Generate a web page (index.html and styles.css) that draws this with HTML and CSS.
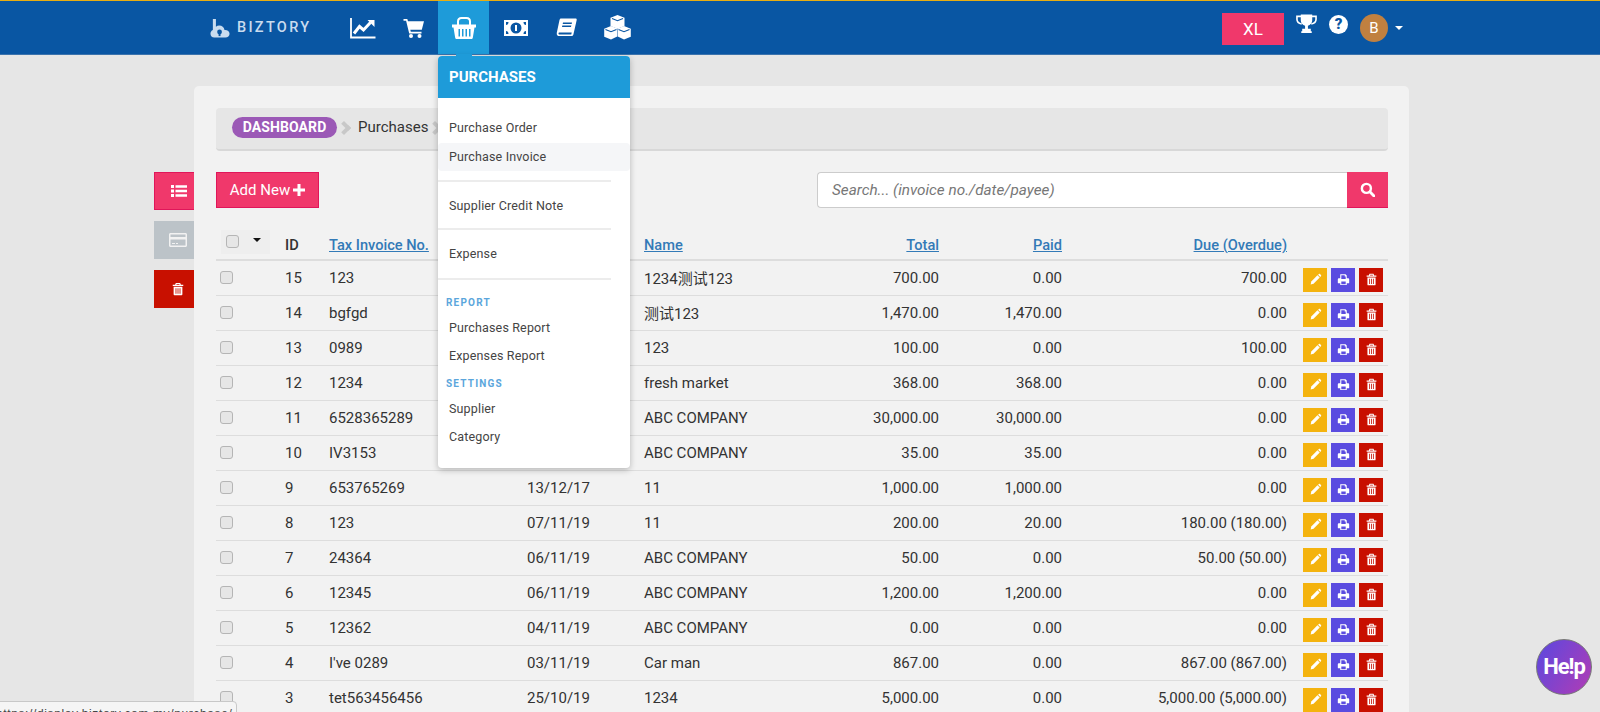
FILE: index.html
```html
<!DOCTYPE html>
<html lang="en">
<head>
<meta charset="utf-8">
<title>Biztory - Purchases</title>
<link rel="stylesheet" href="styles.css">
</head>
<body>
<svg class="defs" width="0" height="0" aria-hidden="true">
  <symbol id="i-pencil" viewBox="0 0 16 16"><path d="M2 14l.8-3.6 7.6-7.6 2.8 2.8-7.6 7.6L2 14z" fill="currentColor"/><path d="M11.2 2l1-.8c.4-.3.9-.3 1.2 0l1.4 1.4c.3.3.3.8 0 1.2l-.9 1z" fill="currentColor"/></symbol>
  <symbol id="i-print" viewBox="0 0 16 16"><path fill-rule="evenodd" d="M4 1.500h6.500L12 3v3.500h1.500c.8 0 1.500.7 1.500 1.500v4c0 .4-.3.7-.7.7H12v2H4v-2H1.700c-.4 0-.7-.3-.7-.7V8c0-.8.7-1.500 1.500-1.500H4zM5.300 2.800v4.500h5.400V4.300H9.500V2.800zM5.300 10.500v3.200h5.400v-3.200z" fill="currentColor"/></symbol>
  <symbol id="i-trash" viewBox="0 0 16 16"><path fill-rule="evenodd" d="M5.500 1h5l.8 2H14v1.500H2V3h2.700zM6.500 2.300L6.100 3h3.800l-.4-.7zM3 5.500h10V14c0 .8-.6 1.200-1.200 1.200H4.200C3.600 15.200 3 14.800 3 14zM5.200 7v6.500h1V7zM7.500 7v6.500h1V7zM9.800 7v6.500h1V7z" fill="currentColor"/></symbol>
</svg>

<header class="topbar">
  <div class="logo">
    <svg class="logo-mark" viewBox="0 0 22 22"><path d="M3 1.500h3.200v8.300c1-.9 2.200-1.300 3.500-1.300 2.900 0 5 1.900 5.500 4.500 2.800-.3 5.300 1.400 5.300 4 0 2.400-1.900 4-4.300 4H4.500C2 21 .5 19.200.5 17c0-1.800 1-3.300 2.500-3.900z" fill="#c9dcef"/><circle cx="10" cy="15.200" r="2.500" fill="#0956a3"/><rect x="9" y="15.500" width="2" height="4" fill="#0956a3"/></svg>
    <span class="logo-text">BIZTORY</span>
  </div>
  <nav class="mainnav">
    <a class="navitem"><svg viewBox="0 0 26 22" width="26" height="22"><path d="M1 1v19.500h24.500" fill="none" stroke="#fff" stroke-width="1.800"/><path d="M4 16.500l5.500-7 4 3.500 7-7.500" fill="none" stroke="#fff" stroke-width="3"/><path d="M17.500 3h7v7z" fill="#fff"/></svg></a>
    <a class="navitem"><svg viewBox="0 0 22 22" width="22" height="22"><path d="M.5 2h3.800l.7 2.200H21l-2.200 8.500H7.300l.5 2h10.700v1.800H6.200L3.100 3.800H.5z" fill="#fff"/><circle cx="8" cy="19" r="2" fill="#fff"/><circle cx="16.500" cy="19" r="2" fill="#fff"/></svg></a>
    <a class="navitem is-active"><svg viewBox="0 0 26 24" width="26" height="24"><path d="M7 9.500V5.500C7 3.500 8.500 2 10.500 2h5C17.500 2 19 3.500 19 5.500v4" fill="none" stroke="#fff" stroke-width="2"/><path fill-rule="evenodd" d="M1 8.500h24v3h-1.500l-1.700 10.200c-.1.800-.7 1.300-1.500 1.300H5.700c-.8 0-1.400-.5-1.500-1.300L2.500 11.500H1zM7.500 13v7.500h1.500V13zM11 13v7.500h1.500V13zM14.500 13v7.500H16V13zM18 13v7.500h1.500V13z" fill="#fff"/></svg></a>
    <a class="navitem"><svg viewBox="0 0 24 16" width="24" height="16"><path fill-rule="evenodd" d="M0 0h24v16H0zM2 2v12h2.500C4.500 12 3.500 11 2 11V5c1.500 0 2.500-1 2.500-3zM19.500 2c0 2 1 3 2.500 3v6c-1.500 0-2.500 1-2.500 3H22V2zM12 2.500a5.500 5.500 0 100 11 5.500 5.500 0 000-11z" fill="#fff"/><rect x="11" y="5" width="2" height="6" fill="#fff"/></svg></a>
    <a class="navitem"><svg viewBox="0 0 21 20" width="21" height="20"><path fill-rule="evenodd" d="M5 .5h14.500c1 0 1.400.7 1.200 1.500l-3.300 14.500c-.2.800-.8 1.500-1.800 1.500H3c-1.200 0-2-.6-2.200-1.800-.2-.8 0-1.500.2-2.400L3.500 2C3.700 1.100 4.200.5 5 .5zM7 4.500l-.3 1.500h9l.3-1.500zM6.300 7.500L6 9h9l.3-1.500zM3.500 14.500c-.8 0-1 .5-1 1 0 .6.400 1 1.200 1h11.500c.3-.6.400-1.300.5-2z" fill="#fff"/></svg></a>
    <a class="navitem"><svg viewBox="0 0 27 25" width="27" height="25"><path d="M13.500 0l7 2.800v8.200l-7 2.800-7-2.800V2.800z" fill="#fff"/><path d="M7 11l6.300 2.500v8L7 24.500.2 21.800v-8z" fill="#fff"/><path d="M20 11l6.800 2.800v8L20 24.500l-6.300-3v-8z" fill="#fff"/><path d="M8 3.500l5.500 2.200L19 3.500M1.500 14.500L7 16.700l5.500-2.200M14.500 14.500l5.500 2.200 5.500-2.200" fill="none" stroke="#0956a3" stroke-width="1.100"/></svg></a>
  </nav>
  <div class="topbar-right">
    <button class="plan">XL</button>
    <svg class="trophy" viewBox="0 0 22 20" width="21" height="20"><path d="M5 0h12v6c0 3-2 5-4.500 5.800V15h3v2.500h1v2H5.500v-2h1V15h3v-3.200C7 11 5 9 5 6z" fill="#fff"/><path d="M5.500 2H1v3c0 3 2.500 4.500 5 5M16.500 2H21v3c0 3-2.500 4.500-5 5" fill="none" stroke="#fff" stroke-width="1.700"/></svg>
    <span class="help-dot">?</span>
    <span class="avatar">B</span>
    <span class="caret"></span>
  </div>
</header>

<aside class="menu">
  <h2 class="menu-title">PURCHASES</h2>
  <ul class="menu-list first">
    <li>Purchase Order</li>
    <li class="hover">Purchase Invoice</li>
  </ul>
  <ul class="menu-list note"><li>Supplier Credit Note</li></ul>
  <ul class="menu-list expense"><li>Expense</li></ul>
  <div class="menu-group">
    <h3 class="menu-label">REPORT</h3>
    <ul class="menu-sub"><li>Purchases Report</li><li>Expenses Report</li></ul>
    <h3 class="menu-label settings">SETTINGS</h3>
    <ul class="menu-sub"><li>Supplier</li><li>Category</li></ul>
  </div>
</aside>

<div class="page">
  <div class="side">
    <button class="side-btn pink"><svg viewBox="0 0 16 14" width="16" height="14"><path d="M0 1h3v3H0zM0 5.500h3v3H0zM0 10h3v3H0zM4.500 1.200H16v2.600H4.500zM4.500 5.700H16v2.600H4.500zM4.500 10.200H16v2.600H4.500z" fill="#fff"/></svg></button>
    <button class="side-btn grey"><svg viewBox="0 0 18 14" width="18" height="14"><path fill-rule="evenodd" d="M1.500 0h15c.8 0 1.500.7 1.500 1.500v11c0 .8-.7 1.500-1.500 1.500h-15C.7 14 0 13.300 0 12.500v-11C0 .7.700 0 1.500 0zM1.500 1.500V4h15V1.500zM1.500 6.500v6h15v-6zM3 10h3v1H3zM7 10h2v1H7z" fill="#f2f2f2"/></svg></button>
    <button class="side-btn red"><svg width="14" height="16"><use href="#i-trash"/></svg></button>
  </div>

  <main class="panel">
    <div class="crumbs">
      <span class="pill">DASHBOARD</span>
      <span class="chev"></span>
      <span class="crumb">Purchases</span>
      <span class="chev"></span>
    </div>

    <div class="toolbar">
      <button class="add">Add New <svg viewBox="0 0 12 12" width="12" height="12"><path d="M4.500 0h3v4.500H12v3H7.500V12h-3V7.500H0v-3h4.500z" fill="#fff"/></svg></button>
      <form class="search">
        <input class="search-input" type="text" placeholder="Search... (invoice no./date/payee)">
        <button class="search-btn" type="button"><svg viewBox="0 0 16 16" width="15" height="15"><circle cx="6.800" cy="6.800" r="4.800" fill="none" stroke="#fff" stroke-width="2.600"/><path d="M10.500 10.500L15 15" stroke="#fff" stroke-width="3" stroke-linecap="round"/></svg></button>
      </form>
    </div>

    <table class="grid">
      <colgroup>
        <col class="c-check"><col class="c-id"><col class="c-tax"><col class="c-date"><col class="c-name"><col class="c-total"><col class="c-paid"><col class="c-due"><col class="c-act">
      </colgroup>
      <thead>
        <tr>
          <th><span class="headcheck"><input type="checkbox" class="cb"><span class="headcaret"></span></span></th>
          <th>ID</th>
          <th><a>Tax Invoice No.</a></th>
          <th></th>
          <th><a>Name</a></th>
          <th class="num"><a>Total</a></th>
          <th class="num"><a>Paid</a></th>
          <th class="num"><a>Due (Overdue)</a></th>
          <th></th>
        </tr>
      </thead>
      <tbody>
        <tr><td><input type="checkbox" class="cb"></td><td>15</td><td>123</td><td></td><td>1234测试123</td><td class="num">700.00</td><td class="num">0.00</td><td class="num">700.00</td><td><div class="acts"><a class="act yellow"><svg><use href="#i-pencil"/></svg></a><a class="act purple"><svg><use href="#i-print"/></svg></a><a class="act crimson"><svg><use href="#i-trash"/></svg></a></div></td></tr>
        <tr><td><input type="checkbox" class="cb"></td><td>14</td><td>bgfgd</td><td></td><td>测试123</td><td class="num">1,470.00</td><td class="num">1,470.00</td><td class="num">0.00</td><td><div class="acts"><a class="act yellow"><svg><use href="#i-pencil"/></svg></a><a class="act purple"><svg><use href="#i-print"/></svg></a><a class="act crimson"><svg><use href="#i-trash"/></svg></a></div></td></tr>
        <tr><td><input type="checkbox" class="cb"></td><td>13</td><td>0989</td><td></td><td>123</td><td class="num">100.00</td><td class="num">0.00</td><td class="num">100.00</td><td><div class="acts"><a class="act yellow"><svg><use href="#i-pencil"/></svg></a><a class="act purple"><svg><use href="#i-print"/></svg></a><a class="act crimson"><svg><use href="#i-trash"/></svg></a></div></td></tr>
        <tr><td><input type="checkbox" class="cb"></td><td>12</td><td>1234</td><td></td><td>fresh market</td><td class="num">368.00</td><td class="num">368.00</td><td class="num">0.00</td><td><div class="acts"><a class="act yellow"><svg><use href="#i-pencil"/></svg></a><a class="act purple"><svg><use href="#i-print"/></svg></a><a class="act crimson"><svg><use href="#i-trash"/></svg></a></div></td></tr>
        <tr><td><input type="checkbox" class="cb"></td><td>11</td><td>6528365289</td><td></td><td>ABC COMPANY</td><td class="num">30,000.00</td><td class="num">30,000.00</td><td class="num">0.00</td><td><div class="acts"><a class="act yellow"><svg><use href="#i-pencil"/></svg></a><a class="act purple"><svg><use href="#i-print"/></svg></a><a class="act crimson"><svg><use href="#i-trash"/></svg></a></div></td></tr>
        <tr><td><input type="checkbox" class="cb"></td><td>10</td><td>IV3153</td><td></td><td>ABC COMPANY</td><td class="num">35.00</td><td class="num">35.00</td><td class="num">0.00</td><td><div class="acts"><a class="act yellow"><svg><use href="#i-pencil"/></svg></a><a class="act purple"><svg><use href="#i-print"/></svg></a><a class="act crimson"><svg><use href="#i-trash"/></svg></a></div></td></tr>
        <tr><td><input type="checkbox" class="cb"></td><td>9</td><td>653765269</td><td>13/12/17</td><td>11</td><td class="num">1,000.00</td><td class="num">1,000.00</td><td class="num">0.00</td><td><div class="acts"><a class="act yellow"><svg><use href="#i-pencil"/></svg></a><a class="act purple"><svg><use href="#i-print"/></svg></a><a class="act crimson"><svg><use href="#i-trash"/></svg></a></div></td></tr>
        <tr><td><input type="checkbox" class="cb"></td><td>8</td><td>123</td><td>07/11/19</td><td>11</td><td class="num">200.00</td><td class="num">20.00</td><td class="num">180.00 (180.00)</td><td><div class="acts"><a class="act yellow"><svg><use href="#i-pencil"/></svg></a><a class="act purple"><svg><use href="#i-print"/></svg></a><a class="act crimson"><svg><use href="#i-trash"/></svg></a></div></td></tr>
        <tr><td><input type="checkbox" class="cb"></td><td>7</td><td>24364</td><td>06/11/19</td><td>ABC COMPANY</td><td class="num">50.00</td><td class="num">0.00</td><td class="num">50.00 (50.00)</td><td><div class="acts"><a class="act yellow"><svg><use href="#i-pencil"/></svg></a><a class="act purple"><svg><use href="#i-print"/></svg></a><a class="act crimson"><svg><use href="#i-trash"/></svg></a></div></td></tr>
        <tr><td><input type="checkbox" class="cb"></td><td>6</td><td>12345</td><td>06/11/19</td><td>ABC COMPANY</td><td class="num">1,200.00</td><td class="num">1,200.00</td><td class="num">0.00</td><td><div class="acts"><a class="act yellow"><svg><use href="#i-pencil"/></svg></a><a class="act purple"><svg><use href="#i-print"/></svg></a><a class="act crimson"><svg><use href="#i-trash"/></svg></a></div></td></tr>
        <tr><td><input type="checkbox" class="cb"></td><td>5</td><td>12362</td><td>04/11/19</td><td>ABC COMPANY</td><td class="num">0.00</td><td class="num">0.00</td><td class="num">0.00</td><td><div class="acts"><a class="act yellow"><svg><use href="#i-pencil"/></svg></a><a class="act purple"><svg><use href="#i-print"/></svg></a><a class="act crimson"><svg><use href="#i-trash"/></svg></a></div></td></tr>
        <tr><td><input type="checkbox" class="cb"></td><td>4</td><td>I've 0289</td><td>03/11/19</td><td>Car man</td><td class="num">867.00</td><td class="num">0.00</td><td class="num">867.00 (867.00)</td><td><div class="acts"><a class="act yellow"><svg><use href="#i-pencil"/></svg></a><a class="act purple"><svg><use href="#i-print"/></svg></a><a class="act crimson"><svg><use href="#i-trash"/></svg></a></div></td></tr>
        <tr><td><input type="checkbox" class="cb"></td><td>3</td><td>tet563456456</td><td>25/10/19</td><td>1234</td><td class="num">5,000.00</td><td class="num">0.00</td><td class="num">5,000.00 (5,000.00)</td><td><div class="acts"><a class="act yellow"><svg><use href="#i-pencil"/></svg></a><a class="act purple"><svg><use href="#i-print"/></svg></a><a class="act crimson"><svg><use href="#i-trash"/></svg></a></div></td></tr>
      </tbody>
    </table>
  </main>
</div>

<div class="status">https://display.biztory.com.my/purchase/</div>
<a class="helpbubble">He!p</a>
</body>
</html>
```

FILE: styles.css
```css
* { box-sizing: border-box; }
html, body { margin: 0; height: 712px; overflow: hidden; }
body {
  background: #e6e6e6;
  color: #333;
  font-family: Roboto, "Noto Sans CJK SC", sans-serif;
  font-size: 14px;
  position: relative;
}
button { font-family: inherit; border: 0; cursor: pointer; }
.defs { position: absolute; }

/* top bar */
.topbar {
  height: 55px;
  background: #0956a3;
  border-top: 1px solid #e8ad12;
  border-bottom: 1px solid #3b73ad;
  display: flex;
  align-items: stretch;
  padding-left: 210px;
}
.logo { width: 127px; display: flex; align-items: center; gap: 6px; }
.logo-mark { width: 21px; height: 22px; }
.logo-text { color: #c9dcef; font-size: 14.500px; letter-spacing: 2.300px; font-weight: 500; }
.mainnav { display: flex; margin-left: 0; }
.navitem { width: 51px; display: flex; align-items: center; justify-content: center; }
.navitem.is-active { background: #1e9bd9; margin-left: -1px; margin-right: 1px; }
.topbar-right {
  margin-left: auto;
  margin-right: 197px;
  display: flex;
  align-items: center;
  position: relative;
}
.plan {
  width: 62px;
  height: 32px;
  background: #f0386b;
  color: #fff;
  font-size: 17px;
  margin-right: 12px;
  margin-top: 3px;
}
.trophy { margin-right: 12px; margin-top: -7px; }
.help-dot {
  width: 19px;
  height: 19px;
  border-radius: 50%;
  background: #fff;
  color: #0956a3;
  font-size: 15px;
  font-weight: 900;
  text-align: center;
  line-height: 19px;
  margin-right: 12px;
  margin-top: -7px;
}
.avatar {
  width: 28px;
  height: 28px;
  border-radius: 50%;
  background: #c08040;
  color: #fff;
  font-size: 15px;
  text-align: center;
  line-height: 28px;
  margin-right: 7px;
}
.caret {
  width: 0;
  height: 0;
  border-left: 4px solid transparent;
  border-right: 4px solid transparent;
  border-top: 4px solid #fff;
}

/* dropdown */
.menu {
  position: absolute;
  left: 438px;
  top: 56px;
  width: 192px;
  height: 412px;
  background: #fff;
  border-radius: 4px;
  box-shadow: 0 2px 6px rgba(0, 0, 0, .25);
  z-index: 5;
}
.menu::before {
  content: "";
  position: absolute;
  left: 18px;
  top: -2px;
  width: 16px;
  height: 2px;
  background: #1e9bd9;
}
.menu-title {
  margin: 0;
  height: 42px;
  background: #1e9bd9;
  color: #fff;
  border-radius: 4px 4px 0 0;
  font-size: 15px;
  font-weight: 700;
  line-height: 43px;
  padding-left: 11px;
}
.menu-list, .menu-sub { list-style: none; margin: 0; padding: 0; }
.menu li {
  font-size: 12.500px;
  letter-spacing: .15px;
  color: #444;
  padding-left: 11px;
  border-radius: 4px;
}
.menu-list {
  width: 173px;
  border-bottom: 2px solid #ececec;
  padding: 11px 0 10px;
}
.menu-list.expense { padding-bottom: 12px; }
.menu-list li { height: 25px; line-height: 25px; }
.menu-list.first { padding: 16px 0 11px; width: 192px; border-bottom: 0; position: relative; }
.menu-list.first::after {
  content: "";
  position: absolute;
  left: 0;
  bottom: 0;
  width: 173px;
  border-bottom: 2px solid #ececec;
}
.menu-list.first li { height: 28.500px; line-height: 28.500px; }
.menu-list.first li.hover { background: #f5f6f8; }
.menu-group { padding-top: 16px; }
.menu-label {
  margin: 0 0 4px 8px;
  font-size: 10px;
  line-height: 14px;
  letter-spacing: 1.200px;
  font-weight: 700;
  color: #5ba6dc;
}
.menu-label.settings { margin-top: 7px; }
.menu-sub li { height: 28px; line-height: 28px; }

/* page */
.page {
  display: flex;
  padding: 31px 0 0 154px;
}
.side {
  width: 40px;
  padding-top: 86px;
  display: flex;
  flex-direction: column;
  gap: 11px;
}
.side-btn {
  width: 40px;
  height: 38px;
  padding: 0 0 0 8px;
  display: flex;
  align-items: center;
  justify-content: center;
}
.side-btn.pink { background: #f0386b; border: 1px solid #e0165a; border-right: 0; }
.side-btn.grey { background: #bcc3c8; }
.side-btn.red { background: #c81000; color: #fff; }
.panel {
  width: 1215px;
  background: #f2f2f2;
  border-radius: 5px 5px 0 0;
  padding: 22px 21px 0 22px;
}
.crumbs {
  height: 43px;
  background: #e6e6e6;
  border-bottom: 2px solid #d8d8d8;
  border-radius: 4px;
  display: flex;
  align-items: center;
  padding: 0 0 2px 16px;
  gap: 7px;
}
.pill {
  background: #9b59b6;
  color: #fff;
  font-size: 14px;
  font-weight: 700;
  letter-spacing: .1px;
  height: 21px;
  line-height: 21px;
  width: 105px;
  text-align: center;
  border-radius: 11px;
}
.chev {
  width: 10px;
  height: 10px;
  margin: 0 4px 0 -5px;
  border-top: 4px solid #c8c8c8;
  border-right: 4px solid #c8c8c8;
  transform: rotate(45deg);
}
.crumb { font-size: 15px; color: #333; margin: -1px 0 0 -2px; }

.toolbar {
  display: flex;
  justify-content: space-between;
  margin-top: 21px;
}
.add {
  width: 103px;
  height: 36px;
  background: #f0386b;
  border: 1px solid #e0165a;
  color: #fff;
  font-size: 15px;
  display: flex;
  align-items: center;
  justify-content: center;
  gap: 3px;
}
.search { display: flex; height: 36px; width: 571px; }
.search-input {
  flex: 1;
  border: 1px solid #ccc;
  border-right: 0;
  border-radius: 4px 0 0 4px;
  padding: 0 14px;
  background: #fff;
  font-family: inherit;
  font-size: 15.300px;
  font-style: italic;
  outline: 0;
}
.search-input::placeholder { color: #777; opacity: 1; }
.search-btn {
  width: 41px;
  background: #f0386b;
  border-bottom: 1px solid #e0165a;
  display: flex;
  align-items: center;
  justify-content: center;
  padding: 0;
}

/* table */
.grid {
  width: 1172px;
  table-layout: fixed;
  border-collapse: collapse;
  margin-top: 21px;
  font-size: 15px;
}
.c-check { width: 64px; }
.c-id { width: 44px; }
.c-tax { width: 198px; }
.c-date { width: 117px; }
.c-name { width: 180px; }
.c-total { width: 125px; }
.c-paid { width: 123px; }
.c-due { width: 225px; }
.c-act { width: 96px; }
.grid th {
  height: 31px;
  padding: 2px 5px 0;
  text-align: left;
  font-size: 14.600px;
  font-weight: 500;
  color: #333;
  border-bottom: 2px solid #ddd;
}
.grid th a { color: #337ab7; text-decoration: underline; }
.grid td {
  height: 35px;
  padding: 0 5px;
  color: #333;
  border-bottom: 1px solid #ddd;
  white-space: nowrap;
}
.grid .num { text-align: right; }
.cb {
  appearance: none;
  display: block;
  margin: 0 0 0 -1px;
  width: 13px;
  height: 13px;
  border: 1px solid #b5b5b5;
  border-radius: 3px;
  background: #e6e6e6;
}
.headcheck {
  display: flex;
  align-items: center;
  justify-content: space-between;
  width: 49px;
  height: 24px;
  margin-top: -7px;
  padding: 0 9px 0 6px;
  background: #eee;
}
.headcaret {
  width: 0;
  height: 0;
  margin-top: -4px;
  border-left: 4px solid transparent;
  border-right: 4px solid transparent;
  border-top: 4px solid #111;
}
.acts { display: flex; gap: 4px; padding: 4px 0 0 6px; }
.act {
  width: 24px;
  height: 24px;
  display: flex;
  align-items: center;
  justify-content: center;
  color: #fff;
}
.act svg { width: 13px; height: 13px; }
.act.yellow { background: #f4b30e; }
.act.purple { background: #5a4be0; }
.act.crimson { background: #c81000; }

/* overlays */
.status {
  position: absolute;
  left: -11px;
  top: 701px;
  width: 248px;
  height: 20px;
  padding: 4px 6px;
  background: #f5f5f5;
  border: 1px solid #c8c8c8;
  border-radius: 4px;
  color: #444;
  font-size: 12px;
  font-family: "Liberation Sans", sans-serif;
  letter-spacing: .62px;
  line-height: 16px;
  white-space: nowrap;
  z-index: 6;
}
.helpbubble {
  position: absolute;
  left: 1536px;
  top: 639px;
  width: 56px;
  height: 56px;
  border-radius: 50%;
  background: linear-gradient(120deg, #5a48e0, #b23cb4);
  border: 1px solid #777;
  color: #fff;
  font-size: 22px;
  font-weight: 700;
  letter-spacing: -1px;
  text-align: center;
  line-height: 54px;
  z-index: 6;
}
```
